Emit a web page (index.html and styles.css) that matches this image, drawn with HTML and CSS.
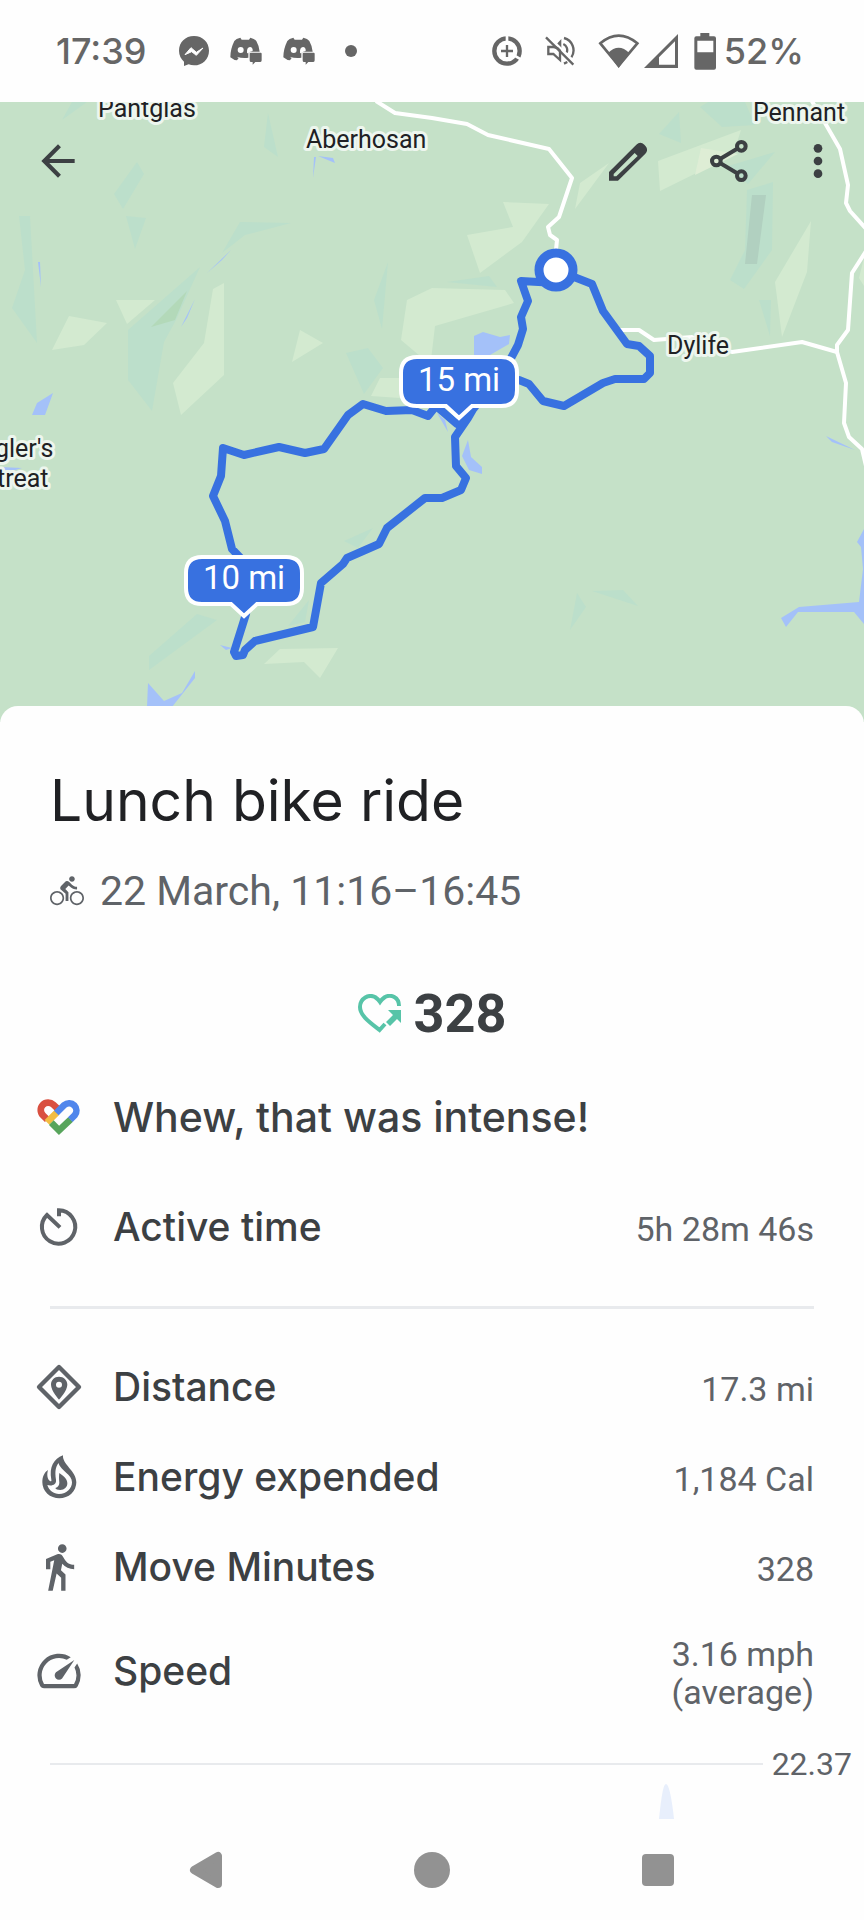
FILE: index.html
```html
<!DOCTYPE html>
<html lang="en">
<head>
<meta charset="utf-8">
<meta name="viewport" content="width=device-width, initial-scale=1">
<title>Lunch bike ride</title>
<link rel="stylesheet" href="styles.css">
</head>
<body>
<svg class="symbols" width="0" height="0" aria-hidden="true">
  <defs>
    <g id="chat-pad"><path fill="#666" d="M725 122Q712 125 707 132 695 156 695 181 706 190 715 190L720 183 714 179Q732 185 749 182V172Q749 164 757 164H783Q782 148 773 132 768 125 755 122L751 128H729Z"/><circle cx="726" cy="159" r="9" fill="#fff"/><path fill="#fff" d="M745 167Q744 151 754 150 763 151 762 162L755 164Q750 165 749 170Z"/><path fill="#666" d="M753 170Q753 167 756 167H786Q789 167 789 170V190Q789 195 785 195H770L762 203V195H756Q753 195 753 190Z"/></g>
  </defs>
</svg>
<div class="screen">
  <header class="status">
    <div class="status-left">
      <time class="clock">17:39</time>
      <svg class="status-icon" width="30" height="30" viewBox="537 112 90 90" aria-hidden="true"><path fill="#666" d="M582 112c-26 0-45 19-45 44 0 13 6 25 15 33v13l14-5c5 2 10 3 16 3 26 0 45-19 45-44s-19-44-45-44z"/><path d="M555 168l18-21 16 14 20-13-20 22-14-11z" fill="#fff" stroke="#fff" stroke-width="3"/></svg>
      <svg class="status-icon" width="32" height="28" viewBox="694 120 96 84" aria-hidden="true"><use href="#chat-pad"/></svg>
      <svg class="status-icon" width="32" height="28" viewBox="694 120 96 84" aria-hidden="true"><use href="#chat-pad"/></svg>
      <span class="more-dot"></span>
    </div>
    <div class="status-right">
      <svg class="data-icon" width="30" height="30" viewBox="194 110 90 90" fill="none" stroke="#666" aria-hidden="true"><circle cx="239" cy="155" r="38" stroke-width="13"/><path stroke="#fff" stroke-width="8" d="M239 105v30M255 165l34 20"/><path stroke-width="7" d="M239 137v36M221 155h36"/></svg>
      <svg class="mute-icon" width="30" height="30" viewBox="357 112 90 90" fill="none" stroke="#666" stroke-width="7" aria-hidden="true"><path d="M367 145v21h15l20 18v-34l-19-5zM414 118a38 38 0 0 1 22 58M424 190l-10 5M412 136a20 20 0 0 1 10 26"/><path fill="#666" stroke="none" d="M393 135l13-14v27z"/><path stroke="#fff" stroke-width="6" d="M366 111l80 79"/><path d="M360 116l82 82"/></svg>
      <svg class="wifi-icon" width="42" height="36" viewBox="510 98 126 108" aria-hidden="true"><path fill="none" stroke="#666" stroke-width="8" d="M517 129Q572 83 628 129L572 196Z"/><path fill="#666" d="M540 158Q572 126 604 158L572 203Z"/></svg>
      <svg class="signal-icon" width="34" height="34" viewBox="645 102 102 102" aria-hidden="true"><path fill="#666" fill-rule="evenodd" d="M747 102V204H645ZM738 124L690 172V194H738Z"/></svg>
      <svg class="battery-icon" width="22" height="37" viewBox="794 97 66 111" aria-hidden="true"><path fill="#666" fill-rule="evenodd" d="M813 97h27v10h14q6 0 6 6v88q0 6-6 6h-53q-6 0-6-6v-88q0-6 6-6h12zM804 120v35h48v-35z"/></svg>
      <span class="battery-text">52%</span>
    </div>
  </header>

  <section class="map" aria-label="Route map">
    <svg class="map-canvas" viewBox="0 102 864 620" preserveAspectRatio="xMidYMid slice">
      <rect class="land" y="102" width="864" height="620"/>
      <g class="forest">
        <path d="M72 102H87L62 120ZM268 113L278 157 264 147ZM137 162L144 174 123 209 114 194ZM19 216H30L37 343 12 308 25 270ZM126 216L146 218 135 249ZM240 222L291 223 245 235 222 253Z"/>
        <path d="M200 267L128 330V380L152 411 164 342 176 320ZM388 262L374 300 382 329ZM346 353L368 348 383 368 364 394Z"/>
        <path d="M679 112L681 143 659 134ZM708 102H745L755 125 722 127 700 107ZM728 166L775 152 748 184ZM747 190L773 182 772 250 744 289 730 280 745 250ZM759 300H771L770 336ZM447 282L489 276 497 287Z"/>
        <path d="M373 528L358 548 344 541ZM309 600L305 622 288 626ZM197 614L217 620 149 670V656ZM577 593L586 607 570 630ZM592 591L623 590 638 606Z"/>
      </g>
      <g class="meadow">
        <path d="M69 316L107 323 84 345 52 350ZM116 300H155L127 324ZM213 289L224 283V375L181 415 173 383 204 343ZM300 330L323 343 292 362ZM380 378H400V398L371 396ZM407 300L432 288 505 290 514 303 435 326 431 360 420 356 401 340Z"/>
        <path d="M503 202L549 204 522 242 480 273 467 235 513 227ZM609 163L575 209 580 183ZM658 161L741 130 733 155 660 191ZM811 221L807 272 782 337 775 282ZM864 258V286L859 278ZM280 649L338 648 320 678 304 662 264 664Z"/>
      </g>
      <path class="sand" d="M701 148L738 154 695 175Z"/>
      <path class="wood" d="M187 291L151 327 175 320Z"/>
      <path class="rock" d="M752 195H766L757 264H745Z"/>
      <g class="water">
        <path d="M314 157L316 157 313 178ZM318 156L333 158 335 163ZM207 273L231 250 222 260ZM181 327L195 299 187 318ZM38 262L40 262 41 287ZM53 393L45 415H32L37 403ZM0 467L22 468 12 471H0Z"/>
        <path d="M474 336L483 332 500 337 510 335 509 344 490 355H474ZM468 440L471 457 482 467V474L469 470 462 456ZM437 413L445 420 448 432ZM826 436L855 450 832 442ZM220 645L232 648 226 650Z"/>
        <path d="M148 683L164 701 182 693 195 671V678L172 707H147ZM864 529L857 542 861 547 863 569 859 602 799 607 781 618 786 627 798 612H854L864 624Z"/>
      </g>
      <g class="road">
        <path d="M376 101L395 113 432 118 467 124 488 135 549 149 572 178 559 217 548 227 550 235 557 240 555 260"/>
        <path d="M810 98L825 123 840 149 848 185 846 203 850 211 868 231M868 248L852 273 848 330 837 345V352L846 383 844 423 849 437 862 449 866 466"/>
        <path d="M615 330H639L654 340 692 337 732 352 802 342 837 352"/>
      </g>
      <g class="route">
        <path d="M556 270L592 284 603 311 627 344 639 346 650 356V373L644 379H615L603 383 564 406 543 401 529 384 519 380 490 380 468 418 455 437 456 466 466 478 461 490 442 498 425 498 387 528 379 544 347 558 343 564 321 583 313 627 255 641 245 650 243 655 236 656 234 652 246 614 252 570 232 549 225 521 213 496 221 476 223 448 244 455 279 447 305 453 324 449 348 415 363 404 386 411 412 410 428 416 436 406 457 424 474 408 510 360 518 345 523 329 521 317 528 301 521 281 556 283"/>
        <circle cx="556" cy="270" r="17"/>
      </g>
      <g class="place">
        <text x="98" y="117">Pantglas</text>
        <text x="306" y="148">Aberhosan</text>
        <text x="753" y="121">Pennant</text>
        <text x="667" y="354">Dylife</text>
        <text x="-5" y="457">gler's</text>
        <text x="-3" y="487">treat</text>
      </g>
      <g class="marker">
        <path d="M417 357H501Q517 357 517 373V390Q517 406 501 406H472L459 418 446 406H417Q401 406 401 390V373Q401 357 417 357Z"/>
        <text x="459" y="391">15 mi</text>
        <path d="M202 557H286Q302 557 302 573V588Q302 604 286 604H257L244 616 231 604H202Q186 604 186 588V573Q186 557 202 557Z"/>
        <text x="244" y="589">10 mi</text>
      </g>
    </svg>
    <nav class="toolbar" aria-label="Activity actions">
      <button class="tool" type="button" aria-label="Back"><svg width="50" height="50" viewBox="0 0 24 24"><path fill="#3c4043" d="M20 11H7.83l5.59-5.59L12 4l-8 8 8 8 1.41-1.41L7.83 13H20z"/></svg></button>
      <div class="tool-group">
        <button class="tool" type="button" aria-label="Edit"><svg width="38" height="40" viewBox="0 0 114 120"><path fill="#3c4043" fill-rule="evenodd" d="M0 119V93L82 11Q94 0 106 11L110 16Q119 27 109 38L27 119ZM14 99V106H22L86 45 77 36Z"/></svg></button>
        <button class="tool" type="button" aria-label="Share"><svg width="38" height="42" viewBox="0 0 114 126" fill="none" stroke="#3c4043" stroke-width="12"><path d="M30 57L84 25M30 69L84 101"/><circle cx="19" cy="63" r="13"/><circle cx="94" cy="19" r="13"/><circle cx="94" cy="107" r="13"/></svg></button>
        <button class="tool tool-narrow" type="button" aria-label="More options"><svg width="10" height="36" viewBox="0 0 30 108" fill="#3c4043"><circle cx="15" cy="16" r="13"/><circle cx="15" cy="54" r="13"/><circle cx="15" cy="92" r="13"/></svg></button>
      </div>
    </nav>
  </section>

  <main class="sheet">
    <h1 class="title">Lunch bike ride</h1>
    <p class="when">
      <svg width="34" height="34" viewBox="0 0 24 24" fill="#5f6368" aria-hidden="true"><path d="M15.500 5.500c1.100 0 2-.9 2-2s-.9-2-2-2-2 .9-2 2 .9 2 2 2zM5 12c-2.800 0-5 2.200-5 5s2.200 5 5 5 5-2.200 5-5-2.200-5-5-5zm0 8.800c-2.100 0-3.800-1.700-3.800-3.800s1.700-3.800 3.800-3.800 3.800 1.700 3.800 3.800-1.700 3.800-3.800 3.800zm5.800-10.300l2.400-2.400.8.800c1.300 1.300 3 2.100 5.100 2.100V9c-1.500 0-2.700-.6-3.600-1.500l-1.900-1.900c-.5-.4-1-.6-1.600-.6s-1.100.2-1.400.6L7.800 8.400c-.4.4-.6.9-.6 1.400 0 .6.2 1.100.6 1.400L11 14v5h2v-6.200l-2.200-2.300zM19 12c-2.800 0-5 2.200-5 5s2.200 5 5 5 5-2.200 5-5-2.200-5-5-5zm0 8.800c-2.100 0-3.800-1.700-3.800-3.800s1.700-3.800 3.800-3.800 3.800 1.700 3.800 3.800-1.700 3.800-3.800 3.800z"/></svg>
      <span>22 March, 11:16–16:45</span>
    </p>
    <p class="points">
      <svg width="44" height="40" viewBox="0 0 44 40" aria-hidden="true"><path fill="none" stroke="#57c4a8" stroke-width="4" d="M41 12C41 3 33 0 27 3Q24 5 22 8 20 5 17 3C11 0 2 4 2 13 2 21 10 27 21.500 36L27 30"/><path fill="#57c4a8" d="M30 16H43V29L39 25 32 32 28 28 35 21Z"/></svg>
      <strong>328</strong>
    </p>

    <div class="row row-tall">
      <svg class="row-icon" viewBox="98 98 156 156" fill="none" stroke-width="20" aria-hidden="true"><path stroke="#d95040" d="M141 184L128 171A22 22 0 0 1 159 139L176 155"/><path stroke="#f2bd42" d="M140 192L170 162"/><path stroke="#58a55c" d="M211 183L176 216 153 193"/><path stroke="#5086ec" d="M168 164L192 140A22 22 0 0 1 223 171L210 184"/></svg>
      <h2 class="row-label headline">Whew, that was intense!</h2>
    </div>
    <dl class="stats">
      <div class="row row-tall">
        <dt class="row-term"><svg class="row-icon" viewBox="98 425 156 156" fill="none" stroke="#5f6368" stroke-width="12" aria-hidden="true"><path d="M176 471V453A50 50 0 1 1 140 467L179 504"/></svg><span class="row-label">Active time</span></dt>
        <dd class="row-value">5h 28m 46s</dd>
      </div>
    </dl>
    <hr class="divider">
    <dl class="stats">
      <div class="row">
        <dt class="row-term"><svg class="row-icon" viewBox="98 65 156 156" aria-hidden="true"><path fill="none" stroke="#5f6368" stroke-width="13" stroke-linejoin="round" d="M176 83L236 143 176 203 116 143Z"/><path fill="#5f6368" fill-rule="evenodd" d="M176 112C162 112 152 122 152 136 152 154 176 181 176 181S201 154 201 136C201 122 190 112 176 112ZM176 127A9 9 0 1 1 176 145 9 9 0 1 1 176 127Z"/></svg><span class="row-label">Distance</span></dt>
        <dd class="row-value">17.3 mi</dd>
      </div>
      <div class="row">
        <dt class="row-term"><svg class="row-icon" viewBox="98 338 156 156" fill="#5f6368" aria-hidden="true"><path fill-rule="evenodd" d="M188 351C185 378 228 398 228 432A51 48 0 0 1 126 432C126 415 132 402 143 395 139 408 141 424 149 428 152 430 154 428 153 424 146 385 160 362 188 351ZM174 374C166 388 163 398 167 424 169 438 156 444 141 440 146 456 160 467 176 467 200 467 215 450 215 432 215 408 182 398 174 374Z"/><path d="M177 404C194 416 201 424 201 435 201 447 192 455 180 455 172 455 166 452 165 449 173 446 177 440 177 433 177 426 175 420 177 404Z"/></svg><span class="row-label">Energy expended</span></dt>
        <dd class="row-value">1,184 Cal</dd>
      </div>
      <div class="row">
        <dt class="row-term"><svg class="row-icon" viewBox="0 0 24 24" fill="#5f6368" aria-hidden="true"><path d="M13.500 5.500c1.100 0 2-.9 2-2s-.9-2-2-2-2 .9-2 2 .9 2 2 2zM9.800 8.900L7 23h2.100l1.800-8 2.100 2v6h2v-7.500l-2.100-2 .6-3C14.800 12 16.800 13 19 13v-2c-1.900 0-3.500-1-4.300-2.400l-1-1.600c-.4-.6-1-1-1.700-1-.3 0-.5.1-.8.1L6 8.300V13h2V9.600l1.800-.7"/></svg><span class="row-label">Move Minutes</span></dt>
        <dd class="row-value">328</dd>
      </div>
      <div class="row row-speed">
        <dt class="row-term"><svg class="row-icon" viewBox="0 0 24 24" fill="#5f6368" aria-hidden="true"><path d="M20.380 8.570l-1.230 1.850a8 8 0 0 1-.22 7.580H5.070A8 8 0 0 1 15.580 6.850l1.850-1.230A10 10 0 0 0 3.350 19a2 2 0 0 0 1.720 1h13.850a2 2 0 0 0 1.740-1 10 10 0 0 0-.27-10.440zm-9.790 6.840a2 2 0 0 0 2.830 0l5.660-8.490-8.490 5.660a2 2 0 0 0 0 2.830z"/></svg><span class="row-label">Speed</span></dt>
        <dd class="row-value">3.16 mph<br>(average)</dd>
      </div>
    </dl>
    <div class="chart">
      <div class="chart-top"><span class="gridline"></span><span class="chart-max">22.37</span></div>
      <svg class="chart-plot" viewBox="0 0 764 36" preserveAspectRatio="none" aria-label="Speed chart"><path fill="#e8effc" d="M609 36C611 17 613 1 616 1S622 17 624 36Z"/></svg>
    </div>
  </main>

  <nav class="system-nav" aria-label="System navigation">
    <button class="nav-button" type="button" aria-label="Back"><svg width="36" height="38" viewBox="0 0 36 38"><path fill="#929292" stroke="#929292" stroke-width="8" stroke-linejoin="round" d="M6 19L30 5V33Z"/></svg></button>
    <button class="nav-button" type="button" aria-label="Home"><svg width="38" height="38" viewBox="0 0 38 38"><circle cx="19" cy="19" r="18" fill="#929292"/></svg></button>
    <button class="nav-button" type="button" aria-label="Recent apps"><svg width="32" height="32" viewBox="0 0 32 32"><rect width="32" height="32" rx="4" fill="#929292"/></svg></button>
  </nav>
</div>
</body>
</html>
```
FILE: styles.css
```css
* {
  box-sizing: border-box;
}

body {
  margin: 0;
  background: #fefefe;
  color: #3c4043;
  font-family: Roboto, "Liberation Sans", sans-serif;
}

h1, h2, p, dl, dd {
  margin: 0;
}

button {
  padding: 0;
  border: 0;
  background: none;
}

svg {
  display: block;
  flex: none;
}

.symbols {
  position: absolute;
}

.screen {
  display: flex;
  flex-direction: column;
  min-height: 100vh;
}

/* Status bar */
.status {
  display: flex;
  align-items: center;
  justify-content: space-between;
  height: 102px;
  padding: 0 60px 0 56px;
  color: #666;
  font-family: Inter, Roboto, sans-serif;
  font-size: 36px;
  font-weight: 500;
}

.status-left,
.status-right {
  display: flex;
  align-items: center;
}

.status-left {
  gap: 21px;
}

.clock {
  margin-right: 12px;
}

.more-dot {
  width: 12px;
  height: 12px;
  margin-left: 9px;
  border-radius: 50%;
  background: #666;
}

.data-icon,
.mute-icon {
  margin-right: 23px;
}

.signal-icon {
  margin: 0 16px 0 4px;
}

.battery-icon {
  margin-right: 8px;
}

/* Map */
.map {
  position: relative;
}

.map-canvas {
  width: 100%;
  height: 620px;
}

.land { fill: #c5e1c8; }
.forest { fill: #bcdfcb; }
.meadow { fill: #d3ead0; }
.sand { fill: #deedd5; }
.wood { fill: #b3d9b9; }
.rock { fill: #b1d0c0; }
.water { fill: #a4c1f9; }

.road {
  fill: none;
  stroke: #fff;
  stroke-width: 4px;
  stroke-linejoin: round;
}

.route {
  fill: none;
  stroke: #3871e0;
  stroke-width: 8px;
  stroke-linejoin: round;
}

.route circle {
  fill: #fff;
  stroke-width: 9px;
}

.place {
  fill: #202124;
  stroke: #edf6ee;
  stroke-width: 6px;
  stroke-linejoin: round;
  paint-order: stroke;
  font-size: 25px;
}

.marker path {
  fill: #3871e0;
  stroke: #fff;
  stroke-width: 4px;
}

.marker text {
  fill: #fff;
  font-size: 33px;
  text-anchor: middle;
}

.toolbar {
  position: absolute;
  inset: 31px 30px auto;
  display: flex;
  justify-content: space-between;
}

.tool-group {
  display: flex;
  gap: 45px;
}

.tool {
  display: grid;
  place-items: center;
  width: 56px;
  height: 56px;
}

.tool-narrow {
  width: 32px;
}

/* Activity sheet */
.sheet {
  position: relative;
  display: flex;
  flex: 1;
  flex-direction: column;
  margin-top: -16px;
  padding-top: 60px;
  border-radius: 18px 18px 0 0;
  background: #fefefe;
}

.title {
  padding: 0 50px;
  color: #202124;
  font-family: Inter, Roboto, sans-serif;
  font-size: 57px;
  font-weight: 400;
  line-height: 70px;
}

.when {
  display: flex;
  align-items: center;
  gap: 16px;
  margin-top: 30px;
  padding: 0 50px;
  color: #5f6368;
  font-size: 41px;
  line-height: 50px;
}

.points {
  display: flex;
  align-items: center;
  justify-content: center;
  gap: 12px;
  margin: 66px 0 16px;
  font-size: 54px;
  line-height: 64px;
}

.row {
  display: flex;
  align-items: center;
  justify-content: space-between;
  min-height: 90px;
  padding: 0 50px 0 33px;
}

.row-tall {
  min-height: 110px;
}

.row-speed {
  min-height: 118px;
}

.row-term {
  display: flex;
  align-items: center;
}

.row-icon {
  width: 52px;
  height: 52px;
}

.row-label {
  margin-left: 28px;
  font-family: Inter, Roboto, sans-serif;
  font-size: 39px;
  font-weight: 500;
  line-height: 48px;
}

.headline {
  flex: 1;
  font-size: 41px;
}

.row-value,
.chart-max {
  color: #5f6368;
  font-size: 34px;
  line-height: 38px;
}

.row-value {
  padding-top: 4px;
  text-align: right;
}

.chart-max {
  font-size: 32px;
}

.divider {
  width: auto;
  height: 3px;
  margin: 24px 50px 33px;
  border: 0;
  background: #e8eaed;
}

.chart {
  display: flex;
  flex: 1;
  flex-direction: column;
  padding-top: 15px;
}

.chart-top {
  display: flex;
  align-items: center;
  gap: 9px;
  padding: 0 12px 0 50px;
}

.gridline {
  flex: 1;
  height: 2px;
  background: #e8eaed;
}

.chart-plot {
  width: calc(100% - 100px);
  height: 36px;
  margin: auto 50px 0;
}

/* System navigation */
.system-nav {
  display: flex;
  align-items: center;
  justify-content: center;
  gap: 166px;
  height: 101px;
}

.nav-button {
  display: grid;
  place-items: center;
  width: 60px;
  height: 60px;
}
```
